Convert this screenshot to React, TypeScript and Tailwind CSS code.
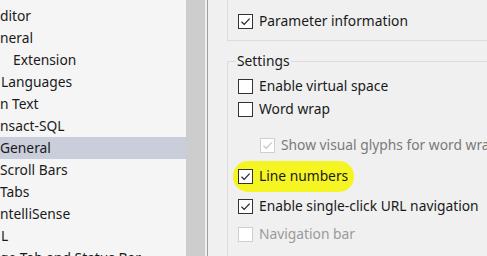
const font = { fontFamily: '"Segoe UI", "Noto Sans", sans-serif' };

type BoxProps = { checked?: boolean; disabled?: boolean };

const Box = ({ checked, disabled }: BoxProps) => (
  <span
    className={
      'w-[15px] h-[15px] shrink-0 bg-white border flex items-center justify-center ' +
      (disabled ? 'border-[#cfcfcf]' : 'border-[#333333]')
    }
  >
    {checked && (
      <svg width="11" height="11" viewBox="0 0 11 11" fill="none">
        <path
          d="M1.5 5.8 L4.2 8.4 L9.6 2.6"
          stroke={disabled ? '#c4c4c4' : '#222222'}
          strokeWidth="1.2"
        />
      </svg>
    )}
  </span>
);

const Row = ({
  label,
  checked,
  disabled,
  dim,
  className
}: BoxProps & { label: string; dim?: string; className?: string }) => (
  <div className={'flex items-center gap-[6px] h-[22px] whitespace-nowrap ' + (className ?? '')}>
    <Box checked={checked} disabled={disabled} />
    <span className={disabled ? dim ?? 'text-[#9a9a9a]' : 'text-[#1a1a1a]'}>{label}</span>
  </div>
);

const tree = [
  { text: 'ditor' },
  { text: 'neral' },
  { text: 'Extension', indent: 'w-[13px]' },
  { text: 'Languages', indent: 'w-px' },
  { text: 'n Text' },
  { text: 'nsact-SQL' },
  { text: 'General', selected: true },
  { text: 'Scroll Bars' },
  { text: 'Tabs' },
  { text: 'ntelliSense' },
  { text: 'L', indent: 'w-px' },
  { text: 'ge Tab and Status Bar' }
];

export default function App() {
  return (
    <div className="w-[487px] h-[256px] flex overflow-hidden text-[13.8px] bg-[#f0f0f0]" style={font}>
      {/* options tree, scrolled sideways */}
      <div className="w-[186px] shrink-0 bg-[#f5f5f5] pt-[5px] overflow-hidden">
        {tree.map((t) => (
          <div
            key={t.text}
            className={
              'h-[22px] flex items-center whitespace-nowrap text-[#1a1a1a] ' +
              (t.selected ? 'bg-[#cacdda]' : '')
            }
          >
            {t.indent && <span className={'shrink-0 ' + t.indent} />}
            <span>{t.text}</span>
          </div>
        ))}
      </div>
      <div className="w-[19px] shrink-0 bg-[#cdcdcd]" />
      <div className="w-[2px] shrink-0 bg-[#f0f0f0]" />
      <div className="w-px shrink-0 bg-[#a0a0a0]" />

      {/* page */}
      <div className="flex-1 pl-[19px] bg-[#f0f0f0]">
        <div className="h-[41px] border-l border-b border-[#dcdcdc] pl-[10px] pt-[10px]">
          <Row label="Parameter information" checked />
        </div>

        <fieldset className="mt-[10px] border border-r-0 border-[#dcdcdc] pl-[10px] h-[260px]">
          <legend className="ml-[-2px] px-[1px] leading-[20px] text-[#1a1a1a]">Settings</legend>
          <Row label="Enable virtual space" className="mt-[4px]" />
          <Row label="Word wrap" className="mt-[1px]" />
          <Row
            label="Show visual glyphs for word wrap"
            checked
            disabled
            dim="text-[#7a7a7a]"
            className="ml-[22px] mt-[14px]"
          />
          <div className="relative mt-[9px]">
            <span className="absolute left-[-5px] top-[-4px] w-[121px] h-[31px] rounded-[15px] bg-[#f5f523]" />
            <Row label="Line numbers" checked className="relative" />
          </div>
          <Row label="Enable single-click URL navigation" checked className="mt-[8px]" />
          <Row label="Navigation bar" disabled className="mt-[6px]" />
        </fieldset>
      </div>
    </div>
  );
}
